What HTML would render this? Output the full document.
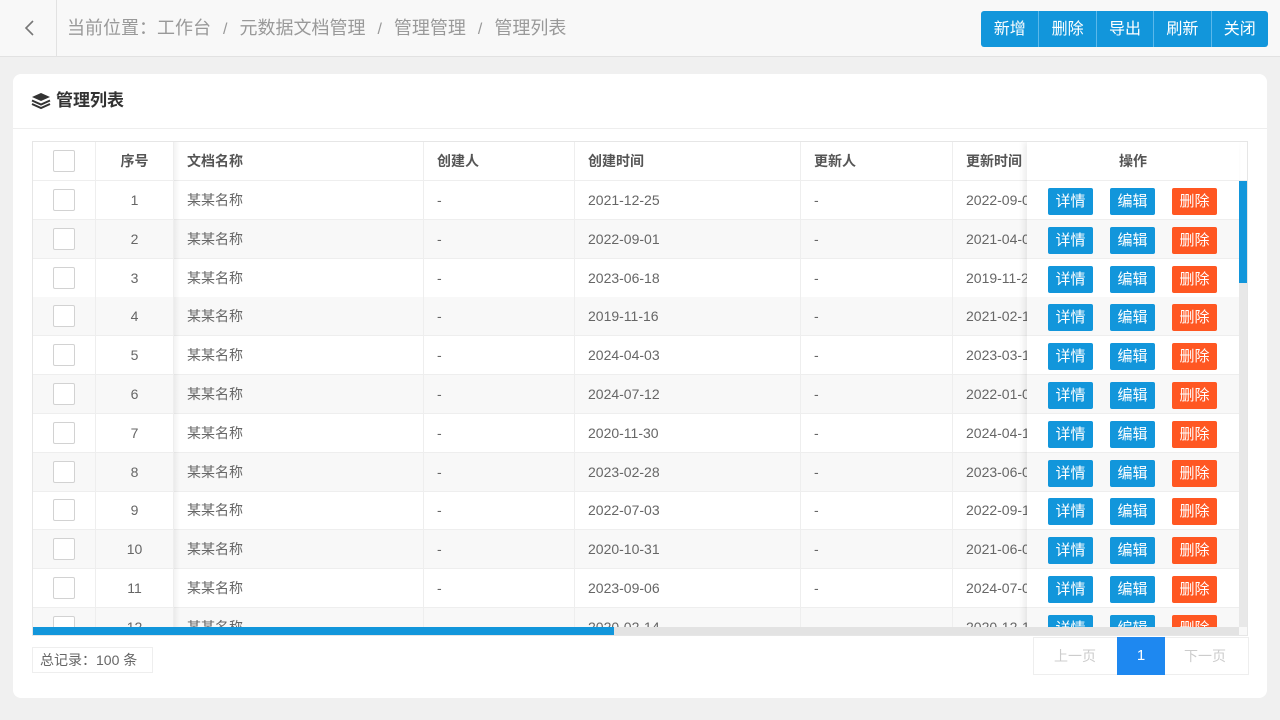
<!DOCTYPE html>
<html><head><meta charset="utf-8"><style>
*{margin:0;padding:0;box-sizing:border-box}
body{width:1280px;height:720px;background:#f0f0f0;font-family:"Liberation Sans","Noto Sans CJK SC",sans-serif;position:relative;overflow:hidden;color:#666}
.hdr{position:absolute;left:0;top:0;width:1280px;height:57px;background:#f8f8f8;border-bottom:1px solid #e2e2e2}
.back{position:absolute;left:0;top:0;width:57px;height:57px;border-right:1px solid #e2e2e2}
.crumb{position:absolute;left:67px;top:15px;font-size:18px;color:#999;line-height:26px}
.crumb span{margin:0 12px;font-size:16px}
.btns{position:absolute;left:981px;top:11px;height:36px;display:flex;border-radius:3px;overflow:hidden}
.btns div{width:57.4px;height:36px;background:#1296db;color:#fff;font-size:16px;line-height:38px;text-align:center;border-left:1px solid #5bb8ea}
.btns div:first-child{border-left:none}
.card{position:absolute;left:13px;top:74px;width:1254px;height:624px;background:#fff;border-radius:8px}
.title{position:absolute;left:0;top:0;width:1254px;height:55px;border-bottom:1px solid #eee;font-size:17px;font-weight:bold;color:#333;line-height:54px;padding-left:43px}
.tbl{position:absolute;left:32px;top:141px;width:1216px;height:495px;border:1px solid #e6e6e6;overflow:hidden;font-size:14px}
.row{position:absolute;left:0;width:1216px;height:39px;border-bottom:1px solid #eee}
.row.alt{background:#f8f8f8}
.c{position:absolute;top:0;height:100%;line-height:38px;border-right:1px solid #eee;padding-left:13px;white-space:nowrap;overflow:hidden;color:#666}
.hd .c{font-weight:bold;color:#555}
.cb{width:22px;height:22px;border:1px solid #d2d2d2;border-radius:2px;background:#fff;position:absolute;left:20px;top:8px}
.fix{position:absolute;left:994px;top:0;width:212px;height:485px;background:#fff;box-shadow:-3px 0 6px rgba(0,0,0,.08);overflow:hidden}
.fr{position:absolute;left:0;width:212px;height:39px;border-bottom:1px solid #eee}
.fr.alt{background:#f8f8f8}
.ab{position:absolute;top:7px;width:45px;height:27px;color:#fff;font-size:15px;line-height:28px;text-align:center;border-radius:2px}
.vs{position:absolute;left:1206px;top:39px;width:10px;height:446px;background:#e8e8e8}
.vt{position:absolute;left:1206px;top:39px;width:9px;height:102px;background:#1296db}
.hs{position:absolute;left:0;top:485px;width:1206px;height:9px;background:#e3e3e3}
.ht{position:absolute;left:0;top:485px;width:581px;height:9px;background:#1296db}
.sh{position:absolute;left:141px;top:0;width:6px;height:485px;background:linear-gradient(to right,rgba(0,0,0,.05),rgba(0,0,0,0))}
</style></head><body>
<div class="hdr"><div class="back"><svg width="57" height="57"><path d="M33 21 L26 28 L33 35" stroke="#777" stroke-width="1.6" fill="none"/></svg></div>
<div class="crumb">当前位置：工作台<span>/</span>元数据文档管理<span>/</span>管理管理<span>/</span>管理列表</div>
<div class="btns"><div>新增</div><div>删除</div><div>导出</div><div>刷新</div><div>关闭</div></div></div>
<div class="card"><svg style="position:absolute;left:18px;top:17px" width="20" height="20" viewBox="0 0 20 20"><path d="M10 2 L19 6 L10 10 L1 6Z" fill="#333"/><path d="M1 9.5 L10 13.5 L19 9.5" stroke="#333" stroke-width="2" fill="none"/><path d="M1 13 L10 17 L19 13" stroke="#333" stroke-width="2" fill="none"/></svg><div class="title">管理列表</div></div>
<div class="tbl" id="t"></div>
<div style="position:absolute;left:32px;top:647px;width:121px;height:26px;border:1px solid #eee;font-size:14px;line-height:24px;padding-left:7px;color:#666">总记录：100 条</div>
<div style="position:absolute;left:1033px;top:637px;width:216px;height:38px;border:1px solid #eee;font-size:14px;color:#ccc;line-height:36px">
<span style="position:absolute;left:20px">上一页</span>
<div style="position:absolute;left:83px;top:-1px;width:48px;height:38px;background:#1e88f0;color:#fff;text-align:center;line-height:38px;font-size:15px">1</div>
<span style="position:absolute;left:150px">下一页</span></div>
<script>
var cr=["2021-12-25","2022-09-01","2023-06-18","2019-11-16","2024-04-03","2024-07-12","2020-11-30","2023-02-28","2022-07-03","2020-10-31","2023-09-06","2020-02-14"];
var up=["2022-09-05","2021-04-06","2019-11-21","2021-02-13","2023-03-11","2022-01-07","2024-04-19","2023-06-05","2022-09-17","2021-06-02","2024-07-08","2020-12-15"];
var cols=[[0,63],[63,78],[141,250],[391,151],[542,226],[768,152],[920,120]];
function cells(v){var h='';for(var i=0;i<cols.length;i++){var s=v[i];var st='left:'+cols[i][0]+'px;width:'+cols[i][1]+'px;';if(i==1)st+='text-align:center;padding-left:0;';if(i==0)h+='<div class="c" style="'+st+'"><div class="cb"></div></div>';else h+='<div class="c" style="'+st+'">'+s+'</div>';}return h;}
var h='<div class="row hd" style="top:0">'+cells(['','序号','文档名称','创建人','创建时间','更新人','更新时间'])+'</div>';
var f='<div class="fr" style="top:0;text-align:center;line-height:38px;font-weight:bold;color:#555;font-size:14px">操作</div>';
for(var r=0;r<12;r++){var t=39+r*38.8;var a=r%2?' alt':'';
h+='<div class="row'+a+'" style="top:'+t+'px">'+cells(['',r+1,'某某名称','-',cr[r],'-',up[r]])+'</div>';
f+='<div class="fr'+a+'" style="top:'+t+'px"><div class="ab" style="left:21px;background:#1296db">详情</div><div class="ab" style="left:83px;background:#1296db">编辑</div><div class="ab" style="left:145px;background:#ff5722">删除</div></div>';}
h+='<div class="sh"></div><div class="fix">'+f+'</div><div class="vs"></div><div class="vt"></div><div class="hs"></div><div class="ht"></div>';
document.getElementById('t').innerHTML=h;
</script>
</body></html>
